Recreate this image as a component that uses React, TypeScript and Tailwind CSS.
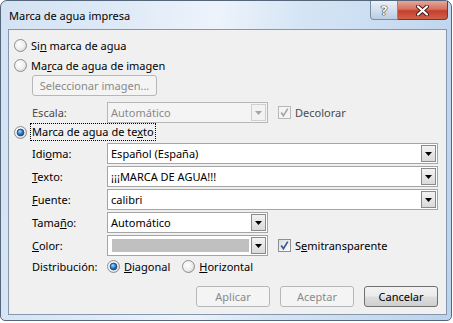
import React from "react";

const Radio = ({ checked }: { checked?: boolean }) => (
  <svg width="13" height="13" viewBox="0 0 13 13" className="shrink-0">
    <defs>
      <radialGradient id="rbg" cx="0.4" cy="0.4" r="0.7">
        <stop offset="0" stopColor="#ffffff" />
        <stop offset="0.6" stopColor="#eeeeee" />
        <stop offset="1" stopColor="#c9c9c9" />
      </radialGradient>
      <radialGradient id="rdot" cx="0.4" cy="0.35" r="0.75">
        <stop offset="0" stopColor="#a9dcff" />
        <stop offset="0.45" stopColor="#2f86d8" />
        <stop offset="1" stopColor="#0d3a72" />
      </radialGradient>
    </defs>
    <circle cx="6.5" cy="6.5" r="6" fill="url(#rbg)" stroke="#8e8f8f" />
    {checked && (
      <circle cx="6.5" cy="6.5" r="3.4" fill="url(#rdot)" stroke="#1b3a66" strokeWidth="0.8" />
    )}
  </svg>
);

const Check = ({ disabled }: { disabled?: boolean }) => (
  <svg width="13" height="13" viewBox="0 0 13 13" className="shrink-0">
    <defs>
      <linearGradient id="cbg" x1="0" y1="0" x2="1" y2="1">
        <stop offset="0" stopColor="#dcdcdc" />
        <stop offset="1" stopColor="#ffffff" />
      </linearGradient>
    </defs>
    <rect x="0.5" y="0.5" width="12" height="12" fill={disabled ? "#f4f4f4" : "url(#cbg)"} stroke={disabled ? "#b8b8b8" : "#8e8f8f"} />
    <path d="M3.2 6.4 L5.4 9.6 L9.8 2.6" fill="none" stroke={disabled ? "#a8a8a8" : "#3a5a9c"} strokeWidth="1.7" />
  </svg>
);

const Arrow = ({ disabled }: { disabled?: boolean }) => (
  <div
    className={
      disabled
        ? "flex h-[17px] w-[15px] shrink-0 items-center justify-center border border-[#d0d0d0] bg-[#f2f2f2]"
        : "flex h-[17px] w-[15px] shrink-0 items-center justify-center border border-[#8a8a8a] bg-gradient-to-b from-[#f3f3f3] to-[#dadada]"
    }
  >
    <svg width="7" height="4" viewBox="0 0 7 4">
      <path d="M0 0h7L3.5 4z" fill={disabled ? "#a6a6a6" : "#000000"} />
    </svg>
  </div>
);

const Combo = ({ value, wide, disabled, children }: { value?: string; wide?: boolean; disabled?: boolean; children?: React.ReactNode }) => (
  <div
    className={
      (wide ? "flex-1 " : "w-[161px] ") +
      (disabled
        ? "flex h-[21px] items-center border border-[#b7b7b7] bg-[#f4f4f4] pr-[1px] text-[#8a8a8a]"
        : "flex h-[21px] items-center border border-[#a5a5a5] bg-white pr-[1px] text-black")
    }
  >
    <div className="flex flex-1 items-center pl-[3px]">{children ?? value}</div>
    <Arrow disabled={disabled} />
  </div>
);

const Label = ({ children }: { children: React.ReactNode }) => (
  <div className="w-[75px] shrink-0">{children}</div>
);

const Btn = ({ label, disabled }: { label: string; disabled?: boolean }) => (
  <div
    className={
      disabled
        ? "flex h-[21px] w-[74px] items-center justify-center rounded-[3px] border border-[#b5b8bb] bg-[#f4f4f4] text-[#8a8a8a]"
        : "flex h-[21px] w-[74px] items-center justify-center rounded-[3px] border border-[#707070] bg-[linear-gradient(#f2f2f2_0%,#ebebeb_48%,#dddddd_52%,#cfcfcf_100%)] text-black"
    }
  >
    {label}
  </div>
);

export default function App() {
  return (
    <div className="h-[323px] w-[453px] bg-white font-['Noto_Sans',sans-serif] text-[11px] leading-[15px] text-black">
      <div className="flex h-[321px] w-[452px] flex-col rounded-t-[7px] rounded-b-[5px] border border-[#56667a] bg-[linear-gradient(96deg,#d3e2f3_0%,#dfeaf7_25%,#edf3fb_45%,#d6e5f5_62%,#bcd3ed_100%)]">
        {/* title bar */}
        <div className="flex h-[28px] shrink-0 items-start">
          <span className="pl-[8px] pt-[7px]">Marca de agua impresa</span>
          <div className="ml-auto mr-[3px] flex">
            <div className="flex h-[19px] w-[28px] items-center justify-center rounded-bl-[4px] border border-t-0 border-[#7b8ca3] bg-gradient-to-b from-[#eaf1f9] to-[#bccde2] text-[13px] font-bold text-white [text-shadow:0_0_1px_#222,0_0_1px_#222,0_0_1px_#222]">
              ?
            </div>
            <div className="flex h-[19px] w-[50px] items-center justify-center rounded-br-[4px] border border-l-0 border-t-0 border-[#6c3b36] bg-[linear-gradient(#e7a698_0%,#d5725f_45%,#c53f2b_55%,#d0604a_100%)]">
              <svg width="13" height="11" viewBox="0 0 13 11">
                <path d="M2 1.5 L11 9.5 M11 1.5 L2 9.5" stroke="#3a1b1b" strokeWidth="4" strokeLinecap="round" />
                <path d="M2 1.5 L11 9.5 M11 1.5 L2 9.5" stroke="#ffffff" strokeWidth="2.2" strokeLinecap="round" />
              </svg>
            </div>
          </div>
        </div>

        {/* panel */}
        <div className="mb-[5px] ml-[7px] mr-[4px] flex flex-1 flex-col border border-[#8597ac] bg-[#f0f0f0] pt-[5px] pr-[8px]">
          <div className="flex h-[20px] items-center gap-[4px] pl-[5px]">
            <Radio />
            <span>
              Si<u>n</u> marca de agua
            </span>
          </div>
          <div className="flex h-[20px] items-center gap-[4px] pl-[5px]">
            <Radio />
            <span>
              Ma<u>r</u>ca de agua de imagen
            </span>
          </div>
          <div className="pl-[23px]">
            <div className="flex h-[21px] w-[125px] items-center justify-center rounded-[3px] border border-[#b5b8bb] bg-[#f4f4f4] text-[#8a8a8a]">
              Seleccionar imagen...
            </div>
          </div>
          <div className="mt-[6px] flex items-center pl-[23px]">
            <Label>
              <span className="text-[#4a4a4a]">Escala:</span>
            </Label>
            <Combo value="Automático" disabled />
            <div className="ml-[10px] flex items-center gap-[4px] text-[#4a4a4a]">
              <Check disabled />
              <span>Decolorar</span>
            </div>
          </div>
          <div className="flex h-[18px] items-center gap-[3px] pl-[5px]">
            <Radio checked />
            <span className="border border-dotted border-black px-[1px] leading-[16px]">
              Marca de agua de te<u>x</u>to
            </span>
          </div>
          <div className="mt-[2px] flex items-center pl-[23px]">
            <Label>
              Idi<u>o</u>ma:
            </Label>
            <Combo value="Español (España)" wide />
          </div>
          <div className="mt-[2px] flex items-center pl-[23px]">
            <Label>
              <u>T</u>exto:
            </Label>
            <Combo value="¡¡¡MARCA DE AGUA!!!" wide />
          </div>
          <div className="mt-[2px] flex items-center pl-[23px]">
            <Label>
              <u>F</u>uente:
            </Label>
            <Combo value="calibri" wide />
          </div>
          <div className="mt-[2px] flex items-center pl-[23px]">
            <Label>
              Tama<u>ñ</u>o:
            </Label>
            <Combo value="Automático" />
          </div>
          <div className="mt-[2px] flex items-center pl-[23px]">
            <Label>
              <u>C</u>olor:
            </Label>
            <Combo>
              <div className="ml-[1px] h-[13px] w-[137px] bg-[#c0c0c0]" />
            </Combo>
            <div className="ml-[10px] flex items-center gap-[4px]">
              <Check />
              <span>
                S<u>e</u>mitransparente
              </span>
            </div>
          </div>
          <div className="mt-[2px] flex h-[16px] items-center pl-[23px]">
            <Label>Distribución:</Label>
            <div className="flex items-center gap-[4px]">
              <Radio checked />
              <span>
                <u>D</u>iagonal
              </span>
            </div>
            <div className="ml-[12px] flex items-center gap-[4px]">
              <Radio />
              <span>
                <u>H</u>orizontal
              </span>
            </div>
          </div>
          <div className="mt-[12px] flex justify-end gap-[10px]">
            <Btn label="Aplicar" disabled />
            <Btn label="Aceptar" disabled />
            <Btn label="Cancelar" />
          </div>
        </div>
      </div>
    </div>
  );
}
